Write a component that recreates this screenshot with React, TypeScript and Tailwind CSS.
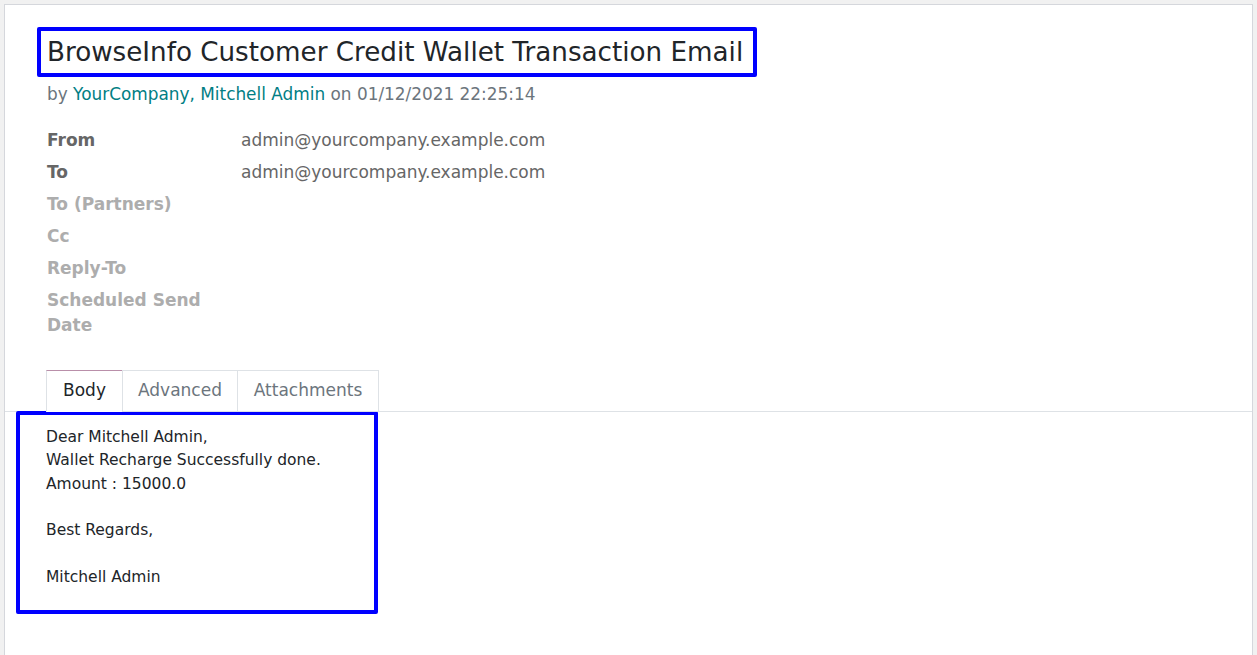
import React from 'react';

const fields = [
  { label: 'From', value: 'admin@yourcompany.example.com', set: true },
  { label: 'To', value: 'admin@yourcompany.example.com', set: true },
  { label: 'To (Partners)', value: '', set: false },
  { label: 'Cc', value: '', set: false },
  { label: 'Reply-To', value: '', set: false },
  { label: 'Scheduled Send Date', value: '', set: false },
];

const tabs = [
  { name: 'Body', width: 'w-[77px]' },
  { name: 'Advanced', width: 'w-[116px]' },
  { name: 'Attachments', width: 'w-[142px]' },
];

const App: React.FC = () => {
  return (
    <div className="min-h-screen bg-[#f1f1f1] pt-1 px-1 font-['DejaVu_Sans',sans-serif] overflow-hidden">
      <div className="bg-white border border-[#d5d7dc] min-h-[680px]">
        <div className="pl-[42px] pt-[22px]">
          <div className="inline-flex items-center -ml-[10px] h-[50px] border-4 border-[#0000ff] rounded-[2px] pl-[6px] pr-[10px]">
            <h1 className="text-[26.2px] leading-none text-[#212529]">
              BrowseInfo Customer Credit Wallet Transaction Email
            </h1>
          </div>
          <p className="mt-[5px] text-[16.9px] leading-[25px] text-[#6c757d]">
            by <span className="text-[#017e84]">YourCompany, Mitchell Admin</span> on 01/12/2021 22:25:14
          </p>

          <div className="mt-[17px] flex flex-col">
            {fields.map((f) => (
              <div key={f.label} className="flex items-start py-[3.5px] text-[17px] leading-[25px]">
                <div
                  className={`w-[194px] pr-[36px] font-bold ${
                    f.set ? 'text-[#666666]' : 'text-[#adadad]'
                  }`}
                >
                  {f.label}
                </div>
                <div className="text-[#666666]">{f.value}</div>
              </div>
            ))}
          </div>
        </div>

        <div className="mt-[29px] border-b border-[#dee2e6] pl-[41px] flex">
          {tabs.map((t, i) => (
            <div
              key={t.name}
              className={`-mb-px h-[42px] flex items-center justify-center ${t.width} text-[17px] border border-[#dee2e6] ${
                i > 0 ? '-ml-px' : ''
              } ${i === 0 ? 'bg-white border-t-[#b98fa9] border-b-white text-[#212529]' : 'text-[#6c757d]'}`}
            >
              {t.name}
            </div>
          ))}
        </div>

        <div className="-mt-px ml-[11px] w-[362px] h-[203px] border-4 border-[#0000ff] rounded-[2px] pl-[26px] pt-[11px] text-[15.5px] leading-[23.33px] text-[#212529]">
          <p>Dear Mitchell Admin,</p>
          <p>Wallet Recharge Successfully done.</p>
          <p>Amount : 15000.0</p>
          <p>&nbsp;</p>
          <p>Best Regards,</p>
          <p>&nbsp;</p>
          <p>Mitchell Admin</p>
        </div>
      </div>
    </div>
  );
};

export default App;
